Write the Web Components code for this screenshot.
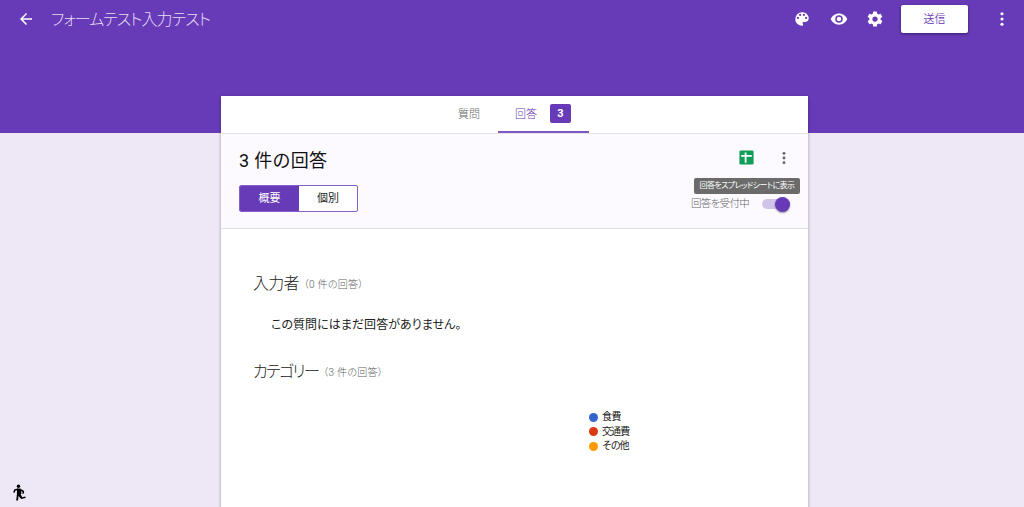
<!DOCTYPE html>
<html lang="ja">
<head>
<meta charset="utf-8">
<title>フォームテスト入力テスト</title>
<style>
  html, body { height: 100%; }
  body {
    margin: 0;
    overflow: hidden;
    background: #ede7f6;
    color: #212121;
    font-family: Roboto, "Noto Sans CJK JP", sans-serif;
    font-size: 11px;
  }
</style>
</head>
<body>
<form-page>
  <app-bar slot="bar">フォームテスト入力テスト</app-bar>
  <tab-strip slot="tabs"></tab-strip>
  <response-header slot="head"></response-header>
  <question-summary label="入力者" count="0" style="--label-spacing:-.8px">
    <empty-note>この質問にはまだ回答がありません。</empty-note>
  </question-summary>
  <question-summary label="カテゴリー" count="3" style="--label-spacing:-1.6px">
    <chart-legend>
      <legend-item color="#3366cc" style="letter-spacing:-.5px">食費</legend-item>
      <legend-item color="#dc3912" style="letter-spacing:-.9px">交通費</legend-item>
      <legend-item color="#ff9900" style="letter-spacing:-1.2px">その他</legend-item>
    </chart-legend>
  </question-summary>
</form-page>

<script>
const ICONS = {
  back: '<path d="M20 11H7.8l5.6-5.6L12 4l-8 8 8 8 1.4-1.4L7.8 13H20z"/>',
  palette: '<path d="M12 3a9 9 0 0 0 0 18c.83 0 1.5-.67 1.5-1.5 0-.39-.15-.74-.39-1.01-.23-.26-.38-.61-.38-.99 0-.83.67-1.5 1.5-1.5H16c2.76 0 5-2.24 5-5 0-4.42-4.03-8-9-8zm-5.5 9a1.5 1.5 0 1 1 0-3 1.5 1.5 0 0 1 0 3zm3-4a1.5 1.5 0 1 1 0-3 1.5 1.5 0 0 1 0 3zm5 0a1.5 1.5 0 1 1 0-3 1.5 1.5 0 0 1 0 3zm3 4a1.5 1.5 0 1 1 0-3 1.5 1.5 0 0 1 0 3z"/>',
  eye: '<path d="M12 4.5C7 4.5 2.73 7.61 1 12c1.73 4.39 6 7.5 11 7.5s9.27-3.11 11-7.5c-1.73-4.39-6-7.5-11-7.5zM12 17a5 5 0 1 1 0-10 5 5 0 0 1 0 10zm0-8a3 3 0 1 0 0 6 3 3 0 0 0 0-6z"/>',
  gear: '<path d="M19.43 12.98c.04-.32.07-.64.07-.98s-.03-.66-.07-.98l2.11-1.65c.19-.15.24-.42.12-.64l-2-3.46c-.12-.22-.39-.3-.61-.22l-2.49 1c-.52-.4-1.08-.73-1.69-.98l-.38-2.65A.49.49 0 0 0 14 2h-4c-.25 0-.46.18-.49.42l-.38 2.65c-.61.25-1.17.59-1.69.98l-2.49-1c-.23-.09-.49 0-.61.22l-2 3.46c-.13.22-.07.49.12.64l2.11 1.65c-.04.32-.07.65-.07.98s.03.66.07.98l-2.11 1.65c-.19.15-.24.42-.12.64l2 3.46c.12.22.39.3.61.22l2.49-1c.52.4 1.08.73 1.69.98l.38 2.65c.03.24.24.42.49.42h4c.25 0 .46-.18.49-.42l.38-2.65c.61-.25 1.17-.59 1.69-.98l2.49 1c.23.09.49 0 .61-.22l2-3.46c.12-.22.07-.49-.12-.64l-2.11-1.65zM12 15.5a3.5 3.5 0 1 1 0-7 3.5 3.5 0 0 1 0 7z"/>',
  more: '<circle cx="12" cy="5" r="2.1"/><circle cx="12" cy="12" r="2.1"/><circle cx="12" cy="19" r="2.1"/>',
  sheet: '<rect x="2" y="2" width="20" height="20" rx="2"/><path fill="#fff" d="M4.500 8.600h5V4.800H12v3.800h7.500v2.400H12v8.500H9.500V11h-5z"/>',
  walker: '<circle cx="10" cy="3" r="2.300"/><path fill="none" stroke="currentColor" stroke-linejoin="round" stroke-width="2" d="M4 11.500l1-3.500 4-1M12.500 7.500l4 2.500-.500 3"/><path d="M8 6h4.800l1.200 6.500-1 1.500 2 3.500 4-1 .6 2-6 1.500-3.600-4-.6 6H7l.8-8z"/>'
};

class UiIcon extends HTMLElement {
  constructor() {
    super();
    this.attachShadow({ mode: "open" });
  }

  connectedCallback() {
    const size = this.getAttribute("size") || 18;
    this.shadowRoot.innerHTML = `
      <style>
        :host { display: inline-flex; flex: none; }
        svg { display: block; fill: currentColor; }
      </style>
      <svg width="${size}" height="${size}" viewBox="0 0 24 24">${ICONS[this.getAttribute("name")]}</svg>
    `;
  }
}

// Base for elements whose shadow tree never changes.
class StaticElement extends HTMLElement {
  constructor() {
    super();
    const template = document.createElement("template");
    template.innerHTML = this.constructor.markup;
    this.attachShadow({ mode: "open" }).appendChild(template.content.cloneNode(true));
  }
}

class FormPage extends StaticElement {
  static markup = `
    <style>
      :host { display: block; height: 100vh; overflow: hidden;
        background: linear-gradient(#673ab7 133px, #ede7f6 133px); }
      ::slotted([slot="bar"]) { margin-bottom: 58px; }
      main { box-sizing: border-box; width: 587px; min-height: 420px; margin-left: 221px;
        background: #fff; box-shadow: 0 1px 3px rgba(0,0,0,.35); }
      .questions { padding: 42px 32px 0; }
      .walker { position: fixed; left: 11px; bottom: 5px; color: #000; }
    </style>
    <slot name="bar"></slot>
    <main>
      <slot name="tabs"></slot>
      <slot name="head"></slot>
      <div class="questions"><slot></slot></div>
    </main>
    <ui-icon class="walker" name="walker" size="18"></ui-icon>
  `;
}

class AppBar extends StaticElement {
  static markup = `
    <style>
      :host { display: flex; align-items: center; box-sizing: border-box; height: 38px;
        padding: 0 13px 0 17px; color: #fff; }
      .title { flex: 1; margin-left: 16px; padding-top: 2px; font-size: 16px; font-weight: 300; line-height: 36px;
        letter-spacing: -.97px; font-feature-settings: "palt"; color: #e6dcf5; }
      .tools { display: flex; align-items: center; gap: 18.5px; }
      button { width: 67px; height: 28px; margin: 0 25px 0 17px; padding: 0; border: 0; border-radius: 2px;
        background: #fff; color: #673ab7; font: 350 11px/26px "Noto Sans CJK JP", sans-serif;
        box-shadow: 0 1px 3px rgba(0,0,0,.45); }
      button span { display: block; margin-top: -2px; }
    </style>
    <ui-icon name="back"></ui-icon>
    <span class="title"><slot></slot></span>
    <div class="tools">
      <ui-icon name="palette"></ui-icon>
      <ui-icon name="eye"></ui-icon>
      <ui-icon name="gear"></ui-icon>
    </div>
    <button><span>送信</span></button>
    <ui-icon name="more"></ui-icon>
  `;
}

class TabStrip extends StaticElement {
  static markup = `
    <style>
      :host { display: flex; box-sizing: border-box; height: 37px; padding-left: 219px; background: #fff; }
      .tab { display: flex; align-items: center; box-sizing: border-box; padding: 0 18px;
        border-bottom: 2px solid transparent; color: #666; font-weight: 300; line-height: 16px; }
      .active { padding-left: 17px; border-color: #7e57c2; color: #673ab7; gap: 13px; }
      .label { padding-top: 2px; }
      .badge { width: 21px; height: 19px; border-radius: 2px; background: #673ab7; color: #fff;
        font-weight: 700; line-height: 20px; text-align: center; }
    </style>
    <div class="tab"><span class="label">質問</span></div>
    <div class="tab active"><span class="label">回答</span><span class="badge">3</span></div>
  `;
}

class ViewToggle extends StaticElement {
  static markup = `
    <style>
      :host { display: flex; box-sizing: border-box; width: 119px; height: 27px; overflow: hidden;
        border: 1px solid #8560c8; border-radius: 2px; background: #fff; }
      span { flex: 1; line-height: 25px; text-align: center; }
      .on { flex: none; width: 59px; background: #673ab7; color: #fff; }
    </style>
    <span class="on">概要</span><span>個別</span>
  `;
}

class ToggleSwitch extends StaticElement {
  static markup = `
    <style>
      :host { display: flex; align-items: center; width: 28px; height: 16px; }
      .track { display: flex; align-items: center; justify-content: flex-end; width: 28px; height: 10px;
        border-radius: 5px; background: #d1c4e9; }
      i { width: 15px; height: 15px; border-radius: 50%; background: #673ab7;
        box-shadow: 0 1px 2px rgba(0,0,0,.4); }
    </style>
    <div class="track"><i></i></div>
  `;
}

class ResponseHeader extends StaticElement {
  static markup = `
    <style>
      :host { display: flex; justify-content: space-between; box-sizing: border-box; height: 96px;
        padding: 14px 18px 0; border-top: 1px solid #e6e3ea; border-bottom: 1px solid #e0e0e0;
        background: #fcf9ff; }
      h1 { margin: 0 0 12px; padding-top: 1px; font-size: 18px; font-weight: 400; line-height: 24px;
        letter-spacing: .3px; color: #111; }
      .side { display: flex; flex-direction: column; align-items: flex-end; position: relative; }
      .actions { display: flex; align-items: center; height: 19px; gap: 21px; color: #616161; }
      .sheet { color: #0f9d58; }
      .actions .more { margin-right: -2px; }
      .accept { display: flex; align-items: center; height: 16px; margin-top: 29px; gap: 13px;
        color: #666; font-size: 10.5px; font-weight: 300; letter-spacing: -.7px; font-feature-settings: "palt"; }
      .accept span { line-height: 16px; }
      .tip { position: absolute; top: 30px; right: -10px; box-sizing: border-box; width: 106px; height: 16px;
        border-radius: 2px; background: #6b6b6b; color: #fff; font-size: 8px; line-height: 16px;
        text-align: center; white-space: nowrap; letter-spacing: -.55px; font-feature-settings: "palt"; }
    </style>
    <div>
      <h1>3 件の回答</h1>
      <view-toggle></view-toggle>
    </div>
    <div class="side">
      <div class="actions">
        <ui-icon class="sheet" name="sheet" size="17"></ui-icon>
        <ui-icon class="more" name="more" size="16"></ui-icon>
      </div>
      <div class="accept"><span>回答を受付中</span><toggle-switch></toggle-switch></div>
      <div class="tip">回答をスプレッドシートに表示</div>
    </div>
  `;
}

class QuestionSummary extends StaticElement {
  static markup = `
    <style>
      :host { display: block; }
      header { display: flex; align-items: center; height: 26px; }
      .label { font-size: 16px; font-weight: 300; line-height: 26px; letter-spacing: var(--label-spacing, 0);
        font-feature-settings: "palt"; }
      .count { margin-left: 5px; font-size: 10px; font-weight: 300; line-height: 26px; color: #616161;
        padding-top: 1px; letter-spacing: .3px; font-feature-settings: "palt"; }
    </style>
    <header><span class="label"></span><span class="count"></span></header>
    <slot></slot>
  `;

  connectedCallback() {
    this.shadowRoot.querySelector(".label").textContent = this.getAttribute("label");
    this.shadowRoot.querySelector(".count").textContent = `（${this.getAttribute("count")} 件の回答）`;
  }
}

class EmptyNote extends StaticElement {
  static markup = `
    <style>
      :host { display: block; padding: 18px 0 24px 18px; font-size: 12px; line-height: 20px;
        font-feature-settings: "palt"; letter-spacing: .05px; }
    </style>
    <slot></slot>
  `;
}

class ChartLegend extends StaticElement {
  static markup = `
    <style>
      :host { display: flex; flex-direction: column; padding: 25px 0 0 336px; font-size: 10px; }
    </style>
    <slot></slot>
  `;
}

class LegendItem extends StaticElement {
  static markup = `
    <style>
      :host { display: flex; align-items: center; height: 14.5px; gap: 4px; line-height: 14px; }
      i { width: 9px; height: 9px; border-radius: 50%; }
    </style>
    <i></i><span><slot></slot></span>
  `;

  connectedCallback() {
    this.shadowRoot.querySelector("i").style.background = this.getAttribute("color");
  }
}

customElements.define("ui-icon", UiIcon);
customElements.define("app-bar", AppBar);
customElements.define("tab-strip", TabStrip);
customElements.define("view-toggle", ViewToggle);
customElements.define("toggle-switch", ToggleSwitch);
customElements.define("response-header", ResponseHeader);
customElements.define("question-summary", QuestionSummary);
customElements.define("empty-note", EmptyNote);
customElements.define("chart-legend", ChartLegend);
customElements.define("legend-item", LegendItem);
customElements.define("form-page", FormPage);
</script>
</body>
</html>
